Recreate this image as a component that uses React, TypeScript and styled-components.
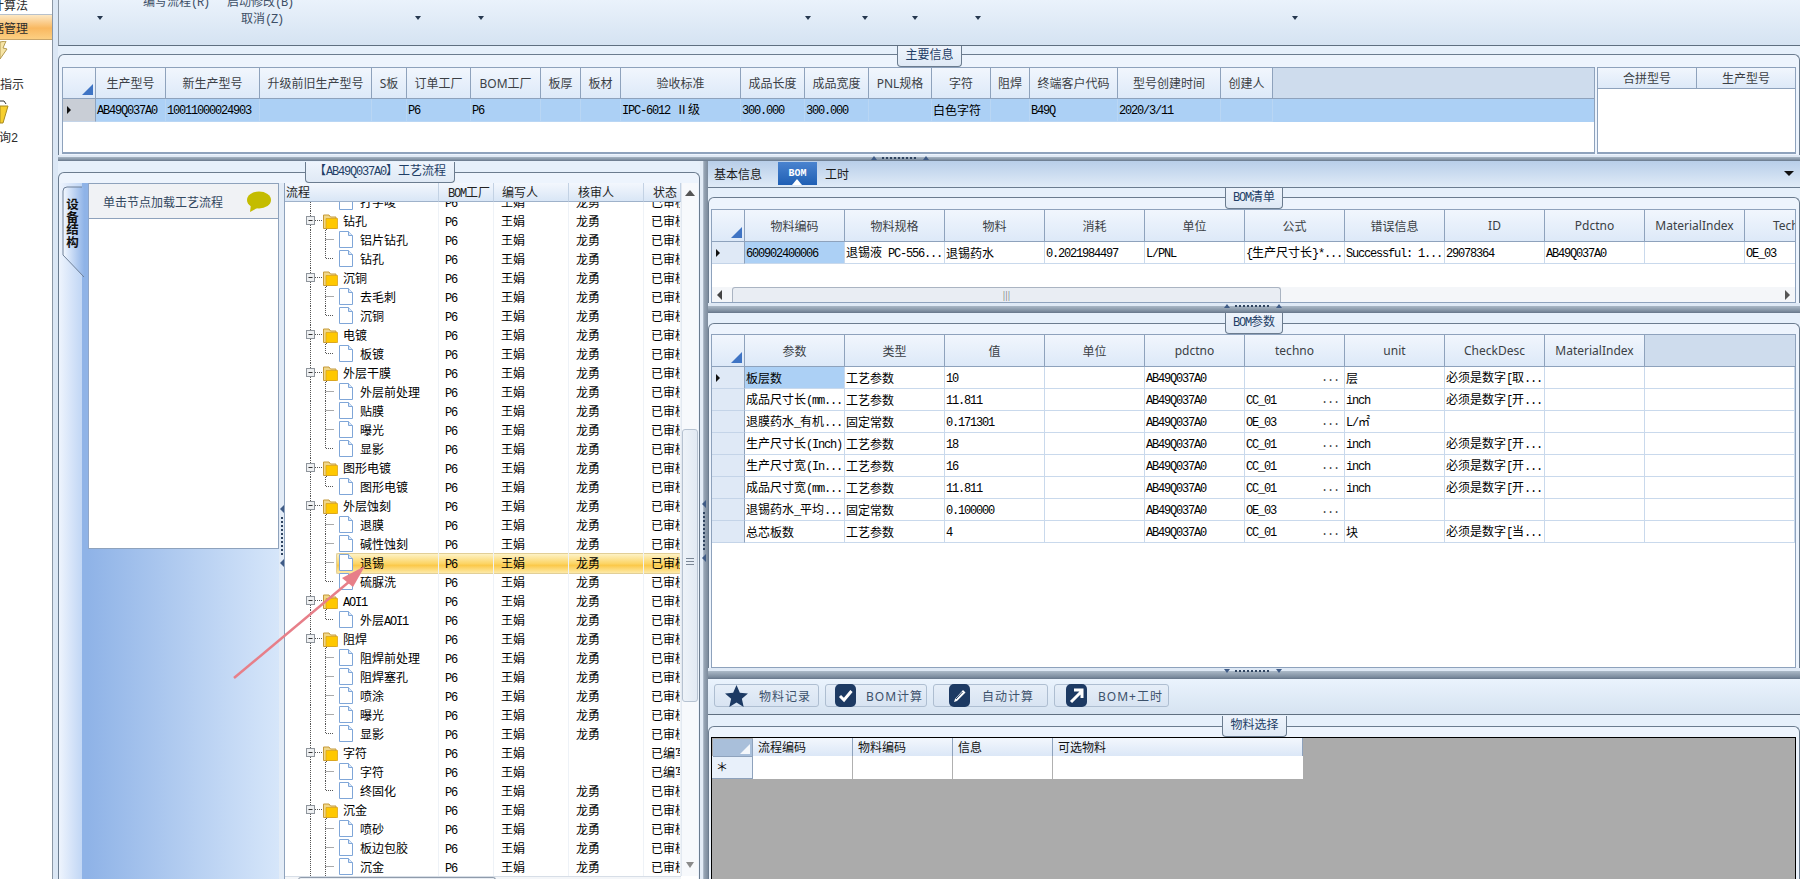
import React from "react";
import styled, { createGlobalStyle } from "styled-components";

const Global = createGlobalStyle`
  html, body { margin: 0; padding: 0; background: #fff; overflow: hidden; }
  * { box-sizing: border-box; }
  body { font-family: "Noto Sans CJK SC", "Noto Sans", sans-serif; font-size: 12px; color: #000; }
`;

const Root = styled.div`
  position: relative; width: 1800px; height: 879px; overflow: hidden; display: flex;
`;
const Latin = styled.span`
  font-family: "Liberation Mono", monospace; font-size: 12px; letter-spacing: -1.2px;
`;
const Txt = ({ t }: { t: string }) => (
  <>
    {t.split(/([\x00-\x7f]+)/).map((p, i) =>
      p === "" ? null : /^[\x00-\x7f]/.test(p) ? <Latin key={i}>{p}</Latin> : <span key={i}>{p}</span>
    )}
  </>
);

/* sidebar */
const Sidebar = styled.aside`
  width: 58px; flex: none; height: 100%; background: linear-gradient(90deg, #fff 0, #fff 52px, #8b97a5 52px, #8b97a5 53px, #dbe7f5 53px);
  overflow: hidden; display: flex; flex-direction: column;
`;
const SideItem = styled.div<{ $h: number; $active?: boolean; $shift: number; $top?: number }>`
  width: 52px; height: ${p => p.$h}px; flex: none; overflow: hidden; white-space: nowrap; line-height: ${p => p.$h}px;
  color: #2c2c2c; text-indent: ${p => p.$shift}px; margin-top: ${p => p.$top ?? 0}px;
  ${p => p.$active ? "background: linear-gradient(#fde8c4, #f9b860 55%, #fccf82); border-bottom: 1px solid #c9a56a; border-top: 1px solid #b7c1cc;" : ""}
`;
const SideIcon = styled.svg<{ $top?: number }>`
  display: block; flex: none; margin-top: ${p => p.$top ?? 0}px;
`;

/* shared groups */
const Main = styled.main`
  width: 1742px; flex: none; height: 100%; display: flex; flex-direction: column; background: #e6eff9;
`;
const Ribbon = styled.header`
  height: 46px; flex: none; overflow: hidden; background: linear-gradient(#eaf2fb, #d5e3f2);
  border-left: 1px solid #8b97a5; border-bottom: 1px solid #5f6f80; color: #3d4f66;
`;
const RibbonLine = styled.div<{ $top: number; $h: number }>`
  display: flex; align-items: center; white-space: nowrap; margin-top: ${p => p.$top}px; height: ${p => p.$h}px;
`;
const RibbonLabel = styled.span<{ $gap: number }>`
  margin-left: ${p => p.$gap}px;
`;
const Caret = styled.i<{ $gap: number }>`
  margin-left: ${p => p.$gap}px; width: 0; height: 0; flex: none;
  border-left: 3px solid transparent; border-right: 3px solid transparent; border-top: 4px solid #26384f;
`;
const Group = styled.section<{ $h: number; $top: number; $pad: number; $px?: number }>`
  position: relative; flex: none; height: ${p => p.$h - p.$top}px; margin-top: ${p => p.$top}px;
  border: 1px solid #6b7c8f; border-bottom: none; border-radius: 6px 6px 0 0;
  padding: ${p => p.$pad}px 3px 0 ${p => p.$px ?? 2}px; background: #edf4fd;
  box-shadow: 0 -${p => p.$top}px 0 #e6f0fb;
`;
const Tag = styled.div<{ $left: number; $w: number; $top: number }>`
  position: absolute; top: ${p => p.$top}px; left: ${p => p.$left}px; width: ${p => p.$w}px; height: 21px;
  background: linear-gradient(#eef4fc, #dfe9f5); border: 1px solid #6b7c8f; border-top: none;
  border-radius: 0 0 4px 4px; text-align: center; line-height: 15px; color: #1f3e66; white-space: nowrap;
`;
const SplitBar = styled.div<{ $h: number }>`
  position: relative; height: ${p => p.$h}px; flex: none; display: flex; justify-content: center;
  background: linear-gradient(#dfe9f5 0, #dfe9f5 25%, #aab8c6 30%, #7e8ea0 80%, #66768a 100%);
`;
const Grip = styled.div<{ $x: number }>`
  position: absolute; left: ${p => p.$x}px; top: 0; width: 58px; height: 5px; display: flex; justify-content: space-between; align-items: center;
`;
const GripTri = styled.i<{ $down?: boolean }>`
  width: 0; height: 0; border-left: 3px solid transparent; border-right: 3px solid transparent;
  ${p => p.$down ? "border-top: 4px solid #3f5b86;" : "border-bottom: 4px solid #3f5b86;"}
`;
const GripDots = styled.i`
  width: 36px; height: 2px; background: repeating-linear-gradient(90deg, #2f4460 0 2px, transparent 2px 4px);
`;

/* data grid */
const GridBox = styled.div<{ $h: number; $w?: number }>`
  height: ${p => p.$h}px; ${p => p.$w ? `width: ${p.$w}px;` : ""} flex: none; background: #fff; border: 1px solid #8ea2bc; border-bottom-width: 2px;
  display: flex; flex-direction: column; overflow: hidden;
`;
const GridRow = styled.div<{ $cols: string; $h: number; $sel?: boolean }>`
  display: grid; grid-template-columns: ${p => p.$cols}; height: ${p => p.$h}px; flex: none;
  background: ${p => p.$sel ? "#acd0f5" : "transparent"};
`;
const HeadCell = styled.div`
  position: relative; display: flex; align-items: center; justify-content: center; overflow: hidden; white-space: nowrap;
  background: linear-gradient(#f1f6fd, #dde9f8); border-right: 1px solid #8ea2bc; border-bottom: 1px solid #8ea2bc;
  color: #3b3f45; font-family: "Noto Sans", "Noto Sans CJK SC", sans-serif; font-size: 12px;
`;
const HeadClip = styled(HeadCell)`
  justify-content: flex-start; padding-left: 28px;
`;
const HeadFill = styled.div`
  background: #cedced; border-bottom: 1px solid #8ea2bc;
`;
const Corner = styled(HeadCell)`
  &::after {
    content: ""; position: absolute; right: 2px; bottom: 3px; width: 0; height: 0;
    border-left: 11px solid transparent; border-bottom: 11px solid #3f74c4;
  }
`;
const RowHead = styled.div<{ $grey?: boolean }>`
  display: flex; align-items: center; padding-left: 4px; background: ${p => p.$grey ? "#c9ced6" : "#dfe9f6"};
  border-right: 1px solid #8ea2bc; border-bottom: 1px solid #c4d4e8;
`;
const RowMark = styled.i`
  width: 0; height: 0; border-top: 4px solid transparent; border-bottom: 4px solid transparent; border-left: 4px solid #111;
`;
const Cell = styled.div<{ $sel?: boolean; $line?: string }>`
  display: flex; align-items: center; justify-content: space-between; padding: 0 1px; overflow: hidden; white-space: nowrap; line-height: 1;
  border-right: 1px solid ${p => p.$line ?? "#c9d9ec"}; border-bottom: 1px solid ${p => p.$line ?? "#c9d9ec"};
  background: ${p => p.$sel ? "#acd0f5" : "transparent"};
`;
const Dots = styled.span`
  font-family: "Liberation Mono", monospace; font-size: 12px; letter-spacing: -1.2px; padding-right: 4px; line-height: 1; color: #444; align-self: center;
`;
const GridGap = styled.div`
  flex: 1;
`;
const HScroll = styled.div`
  height: 15px; flex: none; display: flex; align-items: center; background: #f4f6f9; padding: 0 5px;
`;
const ScrollThumb = styled.div<{ $w: number; $gap: number }>`
  width: ${p => p.$w}px; margin-left: ${p => p.$gap}px; height: 100%; background: #e9edf3; border: 1px solid #aab4c2; border-bottom: none;
  display: flex; align-items: center; justify-content: center; border-radius: 3px 3px 0 0; color: #777; font-size: 9px;
`;
const ArrowL = styled.i`
  width: 0; height: 0; border-top: 5px solid transparent; border-bottom: 5px solid transparent; border-right: 5px solid #444;
`;
const ArrowR = styled.i`
  width: 0; height: 0; border-top: 5px solid transparent; border-bottom: 5px solid transparent; border-left: 5px solid #555; margin-left: auto;
`;

/* top */
const TopPair = styled.div`
  display: flex; gap: 2px;
`;

/* lower */
const Lower = styled.div`
  display: flex; height: 718px; flex: none;
`;
const LeftCol = styled.div`
  width: 642px; flex: none;
`;
const LeftInner = styled.div`
  display: flex; height: 100%;
`;
const Strip = styled.div`
  width: 29px; flex: none; background: linear-gradient(90deg, #eef4fd 0, #c2d7f5 78%, #8fb3e7 79%, #8fb3e7 100%);
`;
const TabShape = styled.div`
  position: relative; height: 96px; padding: 15px 0 0 6px;
`;
const TabSvg = styled.svg`
  position: absolute; left: 0; top: 0;
`;
const TabLabel = styled.div`
  position: relative; writing-mode: vertical-rl; font-weight: 700; font-size: 12.5px; line-height: 14px; color: #111;
`;
const FlowPane = styled.div`
  width: 191px; flex: none; background: linear-gradient(90deg, #8fb3e7, #d6e6fa);
`;
const FlowCard = styled.div`
  height: 366px; background: #fff; border: 1px solid #8ea2bc; border-left-color: #8fa6c9;
`;
const FlowHead = styled.div`
  height: 35px; display: flex; align-items: center; justify-content: space-between; padding: 0 7px 0 14px;
  background: #f0f2f5; border-bottom: 1px solid #8ea2bc; color: #33475f;
`;
const VSplit = styled.div<{ $w: number }>`
  position: relative; width: ${p => p.$w}px; flex: none; background: #e3ecf7;
`;
const VGrip = styled.div<{ $x: number; $top: number }>`
  position: absolute; left: ${p => p.$x}px; top: ${p => p.$top}px; width: 5px; height: 62px; display: flex; flex-direction: column; align-items: center; justify-content: space-between;
`;
const VTri = styled.i`
  width: 0; height: 0; border-top: 4px solid transparent; border-bottom: 4px solid transparent; border-right: 4px solid #3f5b86;
`;
const VDots = styled.i`
  width: 2px; height: 38px; background: repeating-linear-gradient(#2f4460 0 2px, transparent 2px 4px);
`;
const TreePane = styled.div`
  width: 414px; flex: none; display: flex; background: #fff; border-left: 1px solid #8ea2bc; overflow: hidden;
`;
const TreeMain = styled.div`
  width: 397px; margin-left: -1px; flex: none; display: flex; flex-direction: column; height: 100%; overflow: hidden;
`;
const TREE_COLS = "155px 55px 75px 75px 37px";
const TreeHeadRow = styled.div`
  display: grid; grid-template-columns: ${TREE_COLS}; height: 19px; flex: none; position: relative; z-index: 2;
`;
const TreeHead = styled.div<{ $pl: number }>`
  padding-left: ${p => p.$pl}px; line-height: 18px; white-space: nowrap; overflow: hidden; color: #222;
  background: linear-gradient(#f3f7fd, #d9e6f6); border-right: 1px solid #c3d2e4; border-bottom: 1px solid #9fb2ca;
`;
const TreeRows = styled.div`
  flex: 1; min-height: 0; overflow: hidden;
`;
const TreeList = styled.div`
  margin-top: -10px;
`;
const TreeRowBox = styled.div<{ $sel?: boolean }>`
  position: relative; display: grid; grid-template-columns: ${TREE_COLS}; height: 19px;
  ${p => p.$sel ? `&::before {
    content: ""; position: absolute; left: 52px; right: 0; top: 0; height: 19px; border: 1px solid #e2cf97; border-right: none; border-radius: 2px;
    background: linear-gradient(#fdf2c6, #fcd566 50%, #fbc94a 60%, #fdeaa8);
  }` : ""}
`;
const TreeName = styled.div`
  position: relative; display: flex; align-items: center; white-space: nowrap; height: 19px; border-right: 1px solid #eef2f7;
`;
const TreeLabel = styled.span`
  position: relative;
`;
const Glyph = styled.svg`
  flex: none; display: block;
`;
const TreeCell = styled.div<{ $pl: number }>`
  position: relative; padding-left: ${p => p.$pl}px; line-height: 19px; white-space: nowrap; overflow: hidden; border-right: 1px solid #eef2f7;
`;
const TreeHBar = styled.div`
  height: 3px; flex: none; padding-left: 14px; background: #f4f6f9; border-top: 1px solid #d7dee7;
`;
const TreeHThumb = styled.div`
  width: 198px; height: 3px; background: #e9edf3; border: 1px solid #8f9bab; border-bottom: none; border-radius: 3px 3px 0 0;
`;
const VBar = styled.div`
  width: 17px; flex: none; display: flex; flex-direction: column; align-items: center; background: #f7f9fc; border-left: 1px solid #e3e9f1; padding-top: 7px; height: 693px;
`;
const VTriUp = styled.i`
  width: 0; height: 0; border-left: 5px solid transparent; border-right: 5px solid transparent; border-bottom: 6px solid #555; flex: none;
`;
const VTriDown = styled.i`
  width: 0; height: 0; border-left: 4px solid transparent; border-right: 4px solid transparent; border-top: 6px solid #8b8b8b; flex: none; margin-top: 160px;
`;
const VThumb = styled.div`
  width: 16px; height: 273px; flex: none; margin-top: 233px; background: linear-gradient(90deg, #eef3f9, #e1e9f3);
  border: 1px solid #b6c2d1; border-radius: 3px; display: flex; align-items: flex-start; justify-content: center; padding-top: 128px;
`;
const VThumbGrip = styled.i`
  width: 8px; height: 7px; border-top: 1px solid #7a8695; border-bottom: 1px solid #7a8695; position: relative;
  &::after { content: ""; position: absolute; left: 0; right: 0; top: 2px; height: 1px; background: #7a8695; }
`;
const MidSplit = styled.div`
  position: relative; width: 8px; flex: none; background: linear-gradient(90deg, #e3ecf7 0, #e3ecf7 40%, #9aa8b8 45%, #7c8b9d 100%);
`;
const RightCol = styled.div`
  width: 1092px; flex: none; display: flex; flex-direction: column;
`;
const TabBar = styled.nav`
  height: 27px; flex: none; display: flex; align-items: stretch; padding: 1px 6px 2px 6px; border-bottom: 1px solid #6b7c8f;
  background: linear-gradient(#b8cee9, #e0ebf7);
`;
const TabItem = styled.div`
  width: 64px; line-height: 24px; color: #1b1b1b; white-space: nowrap;
`;
const TabOn = styled.div`
  position: relative; width: 39px; margin-right: 8px; display: flex; align-items: center; justify-content: center;
  background: linear-gradient(#4a83cf, #1f5fb4); color: #fff; font-weight: 700; font-size: 10px; font-family: "Liberation Mono", monospace;
  &::after { content: ""; position: absolute; left: 14px; bottom: 0; border-left: 5px solid transparent; border-right: 5px solid transparent; border-bottom: 6px solid #fff; }
`;
const TabCaret = styled.i`
  margin: 9px 0 0 auto; width: 0; height: 0; border-left: 5px solid transparent; border-right: 5px solid transparent; border-top: 5px solid #111;
`;
const Toolbar = styled.div`
  height: 36px; flex: none; display: flex; gap: 6px; padding: 5px 0 0 6px; background: linear-gradient(#eaf3fd, #d6e3f1); border-bottom: 1px solid #5f6f80;
`;
const ToolBtn = styled.button<{ $w: number; $pad: number; $gap: number }>`
  width: ${p => p.$w}px; height: 23px; padding: 0 0 0 ${p => p.$pad}px; display: flex; align-items: center; gap: ${p => p.$gap}px; white-space: nowrap;
  background: linear-gradient(#e6eef8, #d8e4f2); border: 1px solid #aebed1; border-radius: 3px;
  color: #3c516b; font: 12px "Noto Sans", "Noto Sans CJK SC", sans-serif; letter-spacing: 1px;
`;
const EmptyGrid = styled.div`
  height: 142px; background: #ababab; border: 1px solid #000; border-bottom: none; overflow: hidden;
`;
const PlainHead = styled.div`
  padding-left: 5px; line-height: 18px; white-space: nowrap; background: linear-gradient(#f3f7fd, #dbe7f7); border-right: 1px solid #8ea2bc; border-bottom: 1px solid #8ea2bc; color: #111;
`;
const PlainCorner = styled.div`
  position: relative; margin: 1px 0 0 1px; background: #a9bfda; border-right: 1px solid #8ea2bc; border-bottom: 1px solid #8ea2bc;
  &::after { content: ""; position: absolute; right: 2px; bottom: 2px; border-left: 10px solid transparent; border-bottom: 10px solid #f4f7fb; }
`;
const StarHead = styled.div`
  background: #e8f0fa; border-right: 1px solid #8ea2bc; border-bottom: 1px solid #8ea2bc; padding-left: 4px; line-height: 22px; font-size: 12px;
`;
const BlankCell = styled.div<{ $last?: boolean }>`
  background: #fff; ${p => p.$last ? "" : "border-right: 1px solid #b0b0b0;"}
`;
const AnnotationSvg = styled.svg`
  position: absolute; left: 0; top: 0; pointer-events: none; z-index: 5;
`;

const Bubble = () => (
  <svg width="25" height="21" viewBox="0 0 25 21">
    <ellipse cx="13" cy="9" rx="12" ry="8.5" fill="#c4bc00" />
    <path d="M5 13 L4 21 L13 16 Z" fill="#c4bc00" />
  </svg>
);

const FolderShape = () => (
  <g>
    <path d="M0.5 3 H6 L7.5 5 H13 V16.5 H0.5 Z" fill="#f0d78a" stroke="#c59a3a" />
    <path d="M3 6.5 H14.5 V16.5 H3 Z" fill="#ffc800" stroke="#d9a520" strokeWidth="0.8" />
  </g>
);

const BranchFolder = () => (
  <Glyph width="59" height="19" viewBox="0 0 59 19">
    <path d="M26.5 0 V19" stroke="#555" strokeDasharray="1 1" />
    <path d="M31 9.5 H39" stroke="#555" strokeDasharray="1 1" />
    <path d="M42.5 12 V19" stroke="#555" strokeDasharray="1 1" />
    <rect x="22.5" y="5.5" width="8" height="8" fill="#eef0f2" stroke="#8f959c" />
    <path d="M24.5 9.5 H28.5" stroke="#333" />
    <g transform="translate(39,1)"><FolderShape /></g>
  </Glyph>
);

const BranchLeaf = ({ last }: { last: boolean }) => (
  <Glyph width="76" height="19" viewBox="0 0 76 19">
    <path d="M26.5 0 V19" stroke="#555" strokeDasharray="1 1" />
    <path d={last ? "M41.5 0 V9.5 H50" : "M41.5 0 V19 M41.5 9.5 H50"} stroke="#555" strokeDasharray="1 1" fill="none" />
    <path d="M55.5 1.5 H64.5 L68.5 5.5 V17.5 H55.5 Z" fill="#fff" stroke="#7fa6d8" />
    <path d="M64.5 1.5 V5.5 H68.5" fill="#dbe8f8" stroke="#7fa6d8" />
  </Glyph>
);

type TR = { n: string; f?: boolean; last?: boolean; sel?: boolean; draft?: boolean };
const tree: TR[] = [
  { n: "打字唛", last: true },
  { n: "钻孔", f: true }, { n: "铝片钻孔" }, { n: "钻孔", last: true },
  { n: "沉铜", f: true }, { n: "去毛刺" }, { n: "沉铜", last: true },
  { n: "电镀", f: true }, { n: "板镀", last: true },
  { n: "外层干膜", f: true }, { n: "外层前处理" }, { n: "贴膜" }, { n: "曝光" }, { n: "显影", last: true },
  { n: "图形电镀", f: true }, { n: "图形电镀", last: true },
  { n: "外层蚀刻", f: true }, { n: "退膜" }, { n: "碱性蚀刻" }, { n: "退锡", sel: true }, { n: "硫脲洗", last: true },
  { n: "AOI1", f: true }, { n: "外层AOI1", last: true },
  { n: "阻焊", f: true }, { n: "阻焊前处理" }, { n: "阻焊塞孔" }, { n: "喷涂" }, { n: "曝光" }, { n: "显影", last: true },
  { n: "字符", f: true, draft: true }, { n: "字符", draft: true }, { n: "终固化", last: true },
  { n: "沉金", f: true }, { n: "喷砂" }, { n: "板边包胶" }, { n: "沉金" },
];

const topCols = "33px 70px 94px 112px 35px 64px 70px 40px 40px 120px 64px 64px 63px 59px 39px 88px 103px 52px 1fr";
const topHead = ["生产型号", "新生产型号", "升级前旧生产型号", "S板", "订单工厂", "BOM工厂", "板厚", "板材", "验收标准", "成品长度", "成品宽度", "PNL规格", "字符", "阻焊", "终端客户代码", "型号创建时间", "创建人"];
const topRow = ["AB49Q037A0", "10011000024903", "", "", "P6", "P6", "", "", "IPC-6012 Ⅱ级", "300.000", "300.000", "", "白色字符", "", "B49Q", "2020/3/11", ""];

const bomCols = "33px repeat(11, 100px)";
const bomHead = ["物料编码", "物料规格", "物料", "消耗", "单位", "公式", "错误信息", "ID", "Pdctno", "MaterialIndex"];
const bomRow = ["600902400006", "退锡液 PC-556...", "退锡药水", "0.2021984497", "L/PNL", "{生产尺寸长}*...", "Successful: 1...", "29078364", "AB49Q037A0", "", "OE_03"];

const parCols = "33px repeat(9, 100px) 1fr";
const parHead = ["参数", "类型", "值", "单位", "pdctno", "techno", "unit", "CheckDesc", "MaterialIndex"];
const parRows: string[][] = [
  ["板层数", "工艺参数", "10", "", "AB49Q037A0", "", "层", "必须是数字[取..."],
  ["成品尺寸长(mm...", "工艺参数", "11.811", "", "AB49Q037A0", "CC_01", "inch", "必须是数字[开..."],
  ["退膜药水_有机...", "固定常数", "0.171301", "", "AB49Q037A0", "OE_03", "L/㎡", ""],
  ["生产尺寸长(Inch)", "工艺参数", "18", "", "AB49Q037A0", "CC_01", "inch", "必须是数字[开..."],
  ["生产尺寸宽(In...", "工艺参数", "16", "", "AB49Q037A0", "CC_01", "inch", "必须是数字[开..."],
  ["成品尺寸宽(mm...", "工艺参数", "11.811", "", "AB49Q037A0", "CC_01", "inch", "必须是数字[开..."],
  ["退锡药水_平均...", "固定常数", "0.100000", "", "AB49Q037A0", "OE_03", "", ""],
  ["总芯板数", "工艺参数", "4", "", "AB49Q037A0", "CC_01", "块", "必须是数字[当..."],
];

const IconBox = ({ children }: { children: React.ReactNode }) => (
  <svg width="21" height="23" viewBox="0 0 21 23">
    <rect x="0" y="0" width="21" height="23" rx="5" fill="#1d3a63" />
    {children}
  </svg>
);

export default function App() {
  return (
    <Root>
      <Global />
      <Sidebar>
        <SideItem $h={18} $top={-4} $shift={-8}>计算法</SideItem>
        <SideItem $h={26} $active $shift={-20}>数据管理</SideItem>
        <SideIcon width="12" height="20" viewBox="0 0 12 20" $top={1}>
          <path d="M0 1 L6 0 L3 7 L7 8 L0 18 Z" fill="#f6e4a6" stroke="#b49a4f" />
        </SideIcon>
        <SideItem $h={18} $shift={0} $top={14}>指示</SideItem>
        <SideIcon width="12" height="25" viewBox="0 0 12 25" $top={6}>
          <path d="M0 2 H4 L6 5" fill="none" stroke="#333" />
          <path d="M0 7 H8 L3 24 H0 Z" fill="#f7cf2e" stroke="#a88a20" />
        </SideIcon>
        <SideItem $h={18} $shift={-13} $top={4}><Txt t="查询2" /></SideItem>
      </Sidebar>

      <Main>
        <Ribbon>
          <RibbonLine $top={-6} $h={14}>
            <RibbonLabel $gap={84}><Txt t="编写流程(R)" /></RibbonLabel>
            <RibbonLabel $gap={18}><Txt t="启动修改(B)" /></RibbonLabel>
          </RibbonLine>
          <RibbonLine $top={2} $h={16}>
            <Caret $gap={38} />
            <RibbonLabel $gap={138}><Txt t="取消(Z)" /></RibbonLabel>
            <Caret $gap={132} />
            <Caret $gap={57} />
            <Caret $gap={321} />
            <Caret $gap={51} />
            <Caret $gap={44} />
            <Caret $gap={57} />
            <Caret $gap={311} />
          </RibbonLine>
        </Ribbon>

        <Group $h={109} $top={8} $pad={12} $px={3}>
          <Tag $left={838} $w={65} $top={-9}>主要信息</Tag>
          <TopPair>
            <GridBox $h={87} $w={1533}>
              <GridRow $cols={topCols} $h={31}>
                <Corner />
                {topHead.map((h, i) => <HeadCell key={i}>{h}</HeadCell>)}
                <HeadFill />
              </GridRow>
              <GridRow $cols={topCols} $h={23} $sel>
                <RowHead $grey><RowMark /></RowHead>
                {topRow.map((c, i) => <Cell key={i} $line="#b9d6f4"><span><Txt t={c} /></span></Cell>)}
                <Cell $line="#acd0f5" />
              </GridRow>
            </GridBox>
            <GridBox $h={87} $w={199}>
              <GridRow $cols="99px 99px" $h={21}>
                <HeadCell>合拼型号</HeadCell>
                <HeadCell>生产型号</HeadCell>
              </GridRow>
            </GridBox>
          </TopPair>
        </Group>

        <SplitBar $h={6}>
          <Grip $x={813}><GripTri /><GripDots /><GripTri /></Grip>
        </SplitBar>

        <Lower>
          <LeftCol>
            <Group $h={718} $top={11} $pad={10} $px={0}>
              <Tag $left={246} $w={150} $top={-11}><Txt t="【AB49Q037A0】工艺流程" /></Tag>
              <LeftInner>
                <Strip>
                  <TabShape>
                    <TabSvg width="29" height="96" viewBox="0 0 29 96">
                      <defs>
                        <linearGradient id="tabg" x1="0" x2="1" y1="0" y2="0">
                          <stop offset="0" stopColor="#f3f8ff" />
                          <stop offset="1" stopColor="#90b4e8" />
                        </linearGradient>
                      </defs>
                      <path d="M23 4 H8 Q4 4 4 8 V72 L25 94 V4 Z" fill="url(#tabg)" />
                      <path d="M23 4 H8 Q4 4 4 8 V72 L25 94" fill="none" stroke="#6e8098" />
                    </TabSvg>
                    <TabLabel>设备结构</TabLabel>
                  </TabShape>
                </Strip>
                <FlowPane>
                  <FlowCard>
                    <FlowHead>单击节点加载工艺流程<Bubble /></FlowHead>
                  </FlowCard>
                </FlowPane>
                <VSplit $w={5}>
                  <VGrip $x={0} $top={322}><VTri /><VDots /><VTri /></VGrip>
                </VSplit>
                <TreePane>
                  <TreeMain>
                    <TreeHeadRow>
                      <TreeHead $pl={2}>流程</TreeHead>
                      <TreeHead $pl={9}><Txt t="BOM工厂" /></TreeHead>
                      <TreeHead $pl={8}>编写人</TreeHead>
                      <TreeHead $pl={9}>核审人</TreeHead>
                      <TreeHead $pl={9}>状态</TreeHead>
                    </TreeHeadRow>
                    <TreeRows>
                      <TreeList>
                        {tree.map((r, i) => (
                          <TreeRowBox key={i} $sel={r.sel}>
                            <TreeName>
                              {r.f ? <BranchFolder /> : <BranchLeaf last={!!r.last} />}
                              <TreeLabel><Txt t={r.n} /></TreeLabel>
                            </TreeName>
                            <TreeCell $pl={6}><Latin>P6</Latin></TreeCell>
                            <TreeCell $pl={7}>王娟</TreeCell>
                            <TreeCell $pl={7}>{r.draft ? "" : "龙勇"}</TreeCell>
                            <TreeCell $pl={7}>{r.draft ? "已编写" : "已审核"}</TreeCell>
                          </TreeRowBox>
                        ))}
                      </TreeList>
                    </TreeRows>
                    <TreeHBar><TreeHThumb /></TreeHBar>
                  </TreeMain>
                  <VBar>
                    <VTriUp />
                    <VThumb><VThumbGrip /></VThumb>
                    <VTriDown />
                  </VBar>
                </TreePane>
              </LeftInner>
            </Group>
          </LeftCol>

          <MidSplit>
            <VGrip $x={1} $top={339}><VTri /><VDots /><VTri /></VGrip>
          </MidSplit>

          <RightCol>
            <TabBar>
              <TabItem>基本信息</TabItem>
              <TabOn>BOM</TabOn>
              <TabItem>工时</TabItem>
              <TabCaret />
            </TabBar>

            <Group $h={115} $top={9} $pad={11}>
              <Tag $left={516} $w={58} $top={-10}><Txt t="BOM清单" /></Tag>
              <GridBox $h={95}>
                <GridRow $cols={bomCols} $h={32}>
                  <Corner />
                  {bomHead.map((h, i) => <HeadCell key={i}>{h}</HeadCell>)}
                  <HeadClip>Techno</HeadClip>
                </GridRow>
                <GridRow $cols={bomCols} $h={22}>
                  <RowHead><RowMark /></RowHead>
                  {bomRow.map((c, i) => <Cell key={i} $sel={i === 0}><span><Txt t={c} /></span></Cell>)}
                </GridRow>
                <GridGap />
                <HScroll>
                  <ArrowL />
                  <ScrollThumb $w={549} $gap={10}>|||</ScrollThumb>
                  <ArrowR />
                </HScroll>
              </GridBox>
            </Group>

            <SplitBar $h={10}>
              <Grip $x={516}><GripTri /><GripDots /><GripTri /></Grip>
            </SplitBar>

            <Group $h={355} $top={10} $pad={10}>
              <Tag $left={516} $w={58} $top={-11}><Txt t="BOM参数" /></Tag>
              <GridBox $h={335}>
                <GridRow $cols={parCols} $h={32}>
                  <Corner />
                  {parHead.map((h, i) => <HeadCell key={i}>{h}</HeadCell>)}
                  <HeadFill />
                </GridRow>
                {parRows.map((r, i) => (
                  <GridRow key={i} $cols={parCols} $h={22}>
                    <RowHead>{i === 0 ? <RowMark /> : null}</RowHead>
                    {r.map((c, j) => (
                      <Cell key={j} $sel={i === 0 && j === 0}>
                        <span><Txt t={c} /></span>
                        {j === 5 ? <Dots>...</Dots> : null}
                      </Cell>
                    ))}
                    <Cell />
                    <Cell />
                  </GridRow>
                ))}
              </GridBox>
            </Group>

            <SplitBar $h={11}>
              <Grip $x={516}><GripTri $down /><GripDots /><GripTri $down /></Grip>
            </SplitBar>

            <Toolbar>
              <ToolBtn $w={105} $pad={10} $gap={11}>
                <svg width="23" height="22" viewBox="0 0 24 23">
                  <path d="M12 0 L15.5 8 L24 8.8 L17.6 14.4 L19.5 23 L12 18.4 L4.5 23 L6.4 14.4 L0 8.8 L8.5 8 Z" fill="#1d3a63" />
                </svg>
                物料记录
              </ToolBtn>
              <ToolBtn $w={102} $pad={9} $gap={10}>
                <IconBox><path d="M5 12 L9 16 L16.5 7" fill="none" stroke="#fff" strokeWidth="3" /></IconBox>
                BOM计算
              </ToolBtn>
              <ToolBtn $w={115} $pad={15} $gap={12}>
                <IconBox>
                  <path d="M6 15 L14 6 L16.5 8.5 L8 17 L5 18 Z" fill="#fff" />
                  <path d="M7 15 L13.5 8" stroke="#1d3a63" strokeWidth="1" />
                </IconBox>
                自动计算
              </ToolBtn>
              <ToolBtn $w={115} $pad={11} $gap={11}>
                <IconBox><path d="M5 18 L15 8 M8 6 H16 V14" fill="none" stroke="#fff" strokeWidth="3" /></IconBox>
                BOM+工时
              </ToolBtn>
            </Toolbar>

            <Group $h={164} $top={11} $pad={10}>
              <Tag $left={513} $w={65} $top={-11}>物料选择</Tag>
              <EmptyGrid>
                <GridRow $cols="41px 100px 100px 100px 250px" $h={18}>
                  <PlainCorner />
                  <PlainHead>流程编码</PlainHead>
                  <PlainHead>物料编码</PlainHead>
                  <PlainHead>信息</PlainHead>
                  <PlainHead>可选物料</PlainHead>
                </GridRow>
                <GridRow $cols="41px 100px 100px 100px 250px" $h={23}>
                  <StarHead>＊</StarHead>
                  <BlankCell />
                  <BlankCell />
                  <BlankCell />
                  <BlankCell $last />
                </GridRow>
              </EmptyGrid>
            </Group>
          </RightCol>
        </Lower>
      </Main>

      <AnnotationSvg width="1800" height="879" viewBox="0 0 1800 879">
        <path d="M234 678 L350 581" stroke="#e77f89" strokeWidth="2.5" />
        <path d="M365 566 L342 578 L353 587 Z" fill="#e77f89" />
      </AnnotationSvg>
    </Root>
  );
}
